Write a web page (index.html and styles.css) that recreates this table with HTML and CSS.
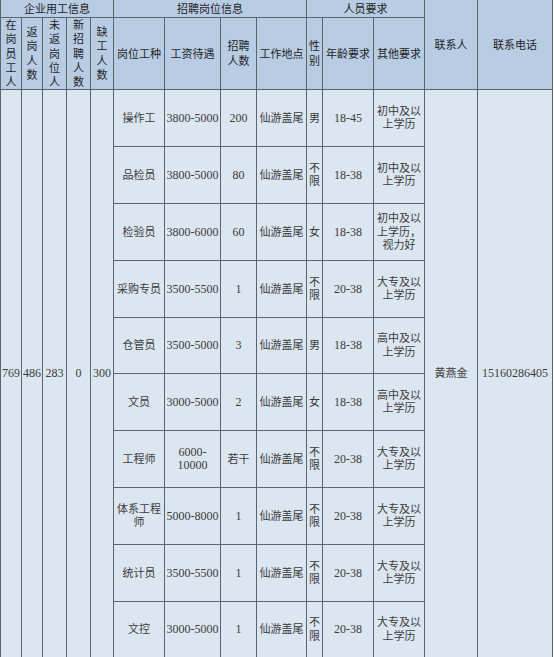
FILE: index.html
```html
<!DOCTYPE html>
<html lang="zh-CN">
<head>
<meta charset="utf-8">
<title>招聘岗位信息</title>
<link rel="stylesheet" href="styles.css">
</head>
<body>
<table class="sheet">
  <colgroup>
    <col class="c21"><col class="c21"><col class="c24"><col class="c24"><col class="c23">
    <col class="c51"><col class="c56"><col class="c36"><col class="c50">
    <col class="c16"><col class="c51"><col class="c51">
    <col class="c53"><col class="c75">
  </colgroup>
  <thead>
    <tr class="h1">
      <th colspan="5">企业用工信息</th>
      <th colspan="4">招聘岗位信息</th>
      <th colspan="3">人员要求</th>
      <th rowspan="2">联系人</th>
      <th rowspan="2">联系电话</th>
    </tr>
    <tr class="h2">
      <th><span class="stack1">在岗员工人</span></th>
      <th><span class="stack1">返岗人数</span></th>
      <th><span class="stack1">未返岗位人</span></th>
      <th><span class="stack1">新招聘人数</span></th>
      <th><span class="stack1">缺工人数</span></th>
      <th>岗位工种</th>
      <th>工资待遇</th>
      <th><span class="stack2">招聘人数</span></th>
      <th>工作地点</th>
      <th><span class="stack1">性别</span></th>
      <th>年龄要求</th>
      <th>其他要求</th>
    </tr>
  </thead>
  <tbody>
    <tr class="r57">
      <td rowspan="10" class="num">769</td>
      <td rowspan="10" class="num">486</td>
      <td rowspan="10" class="num">283</td>
      <td rowspan="10" class="num">0</td>
      <td rowspan="10" class="num">300</td>
      <td>操作工</td><td class="num">3800-5000</td><td class="num">200</td><td>仙游盖尾</td><td>男</td><td class="num">18-45</td><td>初中及以上学历</td>
      <td rowspan="10">黄燕金</td>
      <td rowspan="10" class="num">15160286405</td>
    </tr>
    <tr class="r57"><td>品检员</td><td class="num">3800-5000</td><td class="num">80</td><td>仙游盖尾</td><td>不限</td><td class="num">18-38</td><td>初中及以上学历</td></tr>
    <tr class="r57"><td>检验员</td><td class="num">3800-6000</td><td class="num">60</td><td>仙游盖尾</td><td>女</td><td class="num">18-38</td><td>初中及以上学历，视力好</td></tr>
    <tr class="r57"><td>采购专员</td><td class="num">3500-5500</td><td class="num">1</td><td>仙游盖尾</td><td>不限</td><td class="num">20-38</td><td>大专及以上学历</td></tr>
    <tr class="r56"><td>仓管员</td><td class="num">3500-5000</td><td class="num">3</td><td>仙游盖尾</td><td>男</td><td class="num">18-38</td><td>高中及以上学历</td></tr>
    <tr class="r57"><td>文员</td><td class="num">3000-5000</td><td class="num">2</td><td>仙游盖尾</td><td>女</td><td class="num">18-38</td><td>高中及以上学历</td></tr>
    <tr class="r57"><td>工程师</td><td class="num">6000-<br>10000</td><td>若干</td><td>仙游盖尾</td><td>不限</td><td class="num">20-38</td><td>大专及以上学历</td></tr>
    <tr class="r57"><td>体系工程师</td><td class="num">5000-8000</td><td class="num">1</td><td>仙游盖尾</td><td>不限</td><td class="num">20-38</td><td>大专及以上学历</td></tr>
    <tr class="r57"><td>统计员</td><td class="num">3500-5500</td><td class="num">1</td><td>仙游盖尾</td><td>不限</td><td class="num">20-38</td><td>大专及以上学历</td></tr>
    <tr class="r56"><td>文控</td><td class="num">3000-5000</td><td class="num">1</td><td>仙游盖尾</td><td>不限</td><td class="num">20-38</td><td>大专及以上学历</td></tr>
  </tbody>
</table>
</body>
</html>
```

FILE: styles.css
```css
html, body {
  margin: 0;
  padding: 0;
  background: #ffffff;
}

.sheet {
  border-collapse: collapse;
  table-layout: fixed;
  width: 553px;
  font-family: "Liberation Serif", "Noto Sans CJK SC", serif;
  font-size: 11px;
  line-height: 13.5px;
  color: #3b3b3b;
}

.c16 { width: 16px; }
.c21 { width: 21px; }
.c23 { width: 23px; }
.c24 { width: 24px; }
.c36 { width: 36px; }
.c50 { width: 50px; }
.c51 { width: 51px; }
.c53 { width: 53px; }
.c56 { width: 56px; }
.c75 { width: 75px; }

.sheet th,
.sheet td {
  border: 1px solid #5b6570;
  padding: 0;
  text-align: center;
  vertical-align: middle;
  overflow: hidden;
  word-break: break-all;
}

.sheet th {
  background: #b8cce4;
  font-weight: normal;
  color: #1e1e1e;
  line-height: 14.3px;
}

.sheet td {
  background: #dce6f1;
}

.h1 th {
  border-top: 0;
  height: 17px;
  line-height: 16px;
}

.h2 th {
  height: 70px;
}

.stack1 {
  display: inline-block;
  width: 11px;
  vertical-align: middle;
}

.stack2 {
  display: inline-block;
  width: 22px;
  vertical-align: middle;
}

.r57 td { height: 56px; }
.r56 td { height: 55px; }

.num {
  font-size: 12px;
}
```
